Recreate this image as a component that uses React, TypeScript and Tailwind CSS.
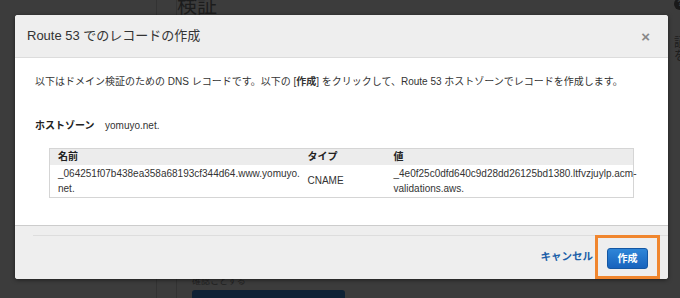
import React from "react";

const font = "font-['Liberation_Sans','Noto_Sans_CJK_JP',sans-serif]";

function Backdrop() {
  return (
    <div className="flex h-[298px] w-[680px] overflow-hidden bg-[#3c3c3c]">
      <div className="w-[157px] border-r border-[#333]" />
      <div className="w-[20px] border-r border-[#333]" />
      <div className="flex flex-1 flex-col">
        <div className="flex items-start justify-between">
          <div className="mt-[-9px] text-[20px] text-[#1c1c1c]">検証</div>
          <div className="mr-[-6px] mt-[-2px] flex h-[12px] w-[12px] items-center justify-center rounded-full bg-[#1a1a1a] text-[9px] font-bold text-[#444]">
            ?
          </div>
        </div>
        <div className="ml-auto mr-[-6px] mt-[16px] flex flex-col text-[12px] leading-[13px] text-[#1c1c1c]">
          <span>証</span>
          <span>を</span>
        </div>
        <div className="ml-[15px] mt-auto text-[9px] leading-[10px] text-[#222]">確認ことする</div>
        <div className="ml-[15px] mt-[4px] h-[8px] w-[153px] rounded-t-[3px] bg-[#0f2235]" />
      </div>
    </div>
  );
}

function Modal() {
  return (
    <div className="absolute left-[15px] top-[15px] flex h-[264px] w-[653px] flex-col overflow-hidden rounded-[3px] bg-white shadow-[0_1px_4px_rgba(0,0,0,0.5)]">
      <div className="flex h-[43px] items-center justify-between border-b border-[#dcdcdc] bg-[#eeeeee] pl-[12px] pr-[18px]">
        <span className="text-[13px] text-[#333]">Route 53 でのレコードの作成</span>
        <span className="text-[15px] font-bold leading-none text-[#888]">×</span>
      </div>

      <div className="flex h-[167px] flex-col px-[20px] pt-[17px] text-[10px] text-[#333]">
        <p className="leading-[14px]">
          以下はドメイン検証のための DNS レコードです。以下の [<b>作成</b>] をクリックして、Route 53 ホストゾーンでレコードを作成します。
        </p>

        <div className="mt-[30px] flex items-center leading-[14px]">
          <span className="w-[70px] font-bold text-[#222]">ホストゾーン</span>
          <span>yomuyo.net.</span>
        </div>

        <table className="mx-[14px] mt-[15px] w-[584px] table-fixed border-collapse border border-[#d5d5d5]">
          <colgroup>
            <col className="w-[250px]" />
            <col className="w-[86px]" />
            <col className="w-[248px]" />
          </colgroup>
          <thead>
            <tr className="bg-[#ececec] text-left font-bold text-[#222]">
              <th className="h-[16px] px-[8px] py-0 leading-[15px]">名前</th>
              <th className="px-[8px] py-0 leading-[15px]">タイプ</th>
              <th className="px-[8px] py-0 leading-[15px]">値</th>
            </tr>
          </thead>
          <tbody>
            <tr className="leading-[15px]">
              <td className="px-[8px] py-[1px] align-middle">
                _064251f07b438ea358a68193cf344d64.www.yomuyo.
                <br />
                net.
              </td>
              <td className="px-[8px] align-middle">CNAME</td>
              <td className="px-[8px] py-[1px] align-middle">
                _4e0f25c0dfd640c9d28dd26125bd1380.ltfvzjuylp.acm-
                <br />
                validations.aws.
              </td>
            </tr>
          </tbody>
        </table>
      </div>

      <div className="flex flex-1 flex-col border-t border-[#cccccc] bg-[#eeeeee]">
        <div className="ml-[18px] mt-[9px] border-t border-[#dddddd]" />
        <div className="mr-[8px] mt-[-1px] flex items-center justify-end">
          <span className="mr-[2px] text-[10.5px] font-bold text-[#1a5ea8]">キャンセル</span>
          <div className="border-[3px] border-[#f0862e] px-[9px] py-[7px]">
            <button className="h-[21px] w-[41px] rounded-[3px] border border-[#1457a3] bg-gradient-to-b from-[#2f86d8] to-[#1763bd] text-[10px] font-bold text-white">
              作成
            </button>
          </div>
        </div>
      </div>
    </div>
  );
}

export default function App() {
  return (
    <div className={`relative h-[298px] w-[680px] ${font}`}>
      <Backdrop />
      <Modal />
    </div>
  );
}
